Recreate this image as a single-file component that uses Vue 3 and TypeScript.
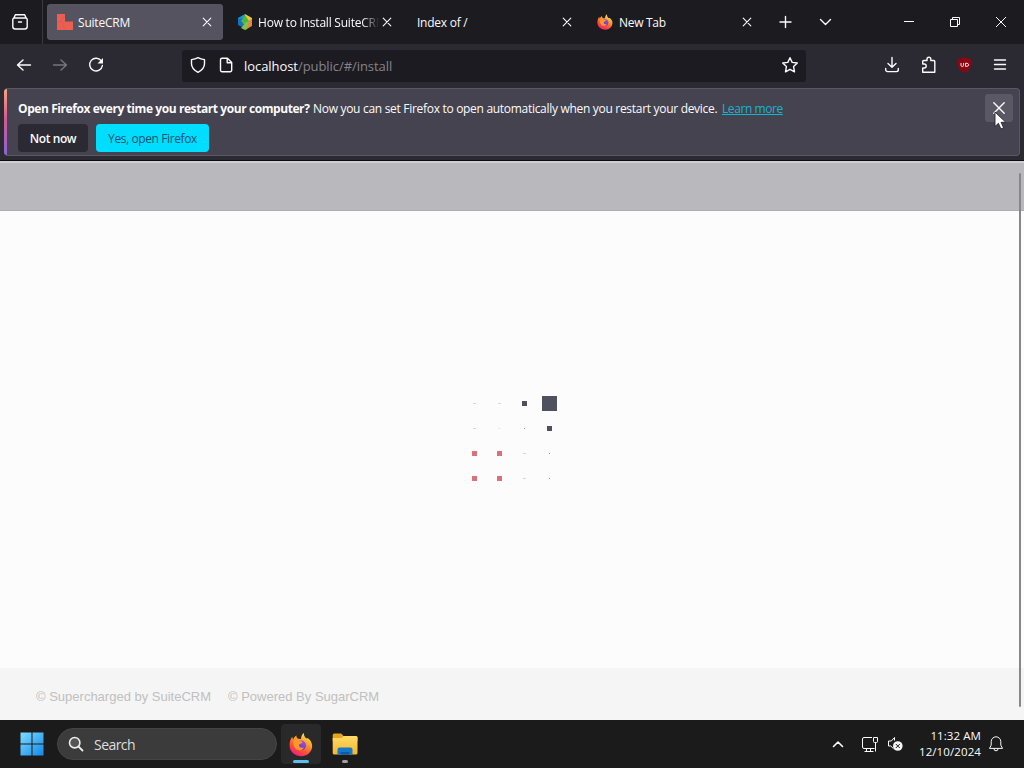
<script setup lang="ts">
interface Tab { title: string; icon: 'suite' | 'hex' | 'fox' | ''; active?: boolean; fit: string }
const tabs: Tab[] = [
  { title: 'SuiteCRM', icon: 'suite', active: true, fit: 'fit-a' },
  { title: 'How to Install SuiteCRM', icon: 'hex', fit: 'fit-b' },
  { title: 'Index of /', icon: '', fit: 'fit-c' },
  { title: 'New Tab', icon: 'fox', fit: 'fit-d' },
]
const dots: string[] = [
  'dash', 'dash', 'dark', 'big',
  'dash', 'faint', 'tiny', 'dark',
  'red', 'red', 'dash', 'tiny',
  'red', 'red', 'dash', 'tiny',
]
</script>

<template>
  <div class="screen">
    <svg class="defs" width="0" height="0" aria-hidden="true">
      <defs>
        <linearGradient id="foxBody" x1=".8" y1="0" x2=".25" y2="1">
          <stop offset="0" stop-color="#fff04a" /><stop offset=".35" stop-color="#ffa42a" />
          <stop offset=".68" stop-color="#ff5138" /><stop offset="1" stop-color="#ec1785" />
        </linearGradient>
        <linearGradient id="foxCore" x1=".7" y1="0" x2=".3" y2="1">
          <stop offset="0" stop-color="#a850e8" /><stop offset="1" stop-color="#513ac4" />
        </linearGradient>
        <linearGradient id="win" x1="0" y1="0" x2="1" y2="1">
          <stop offset="0" stop-color="#7edcff" /><stop offset="1" stop-color="#1289e8" />
        </linearGradient>
        <linearGradient id="folder" x1="0" y1="0" x2="0" y2="1">
          <stop offset="0" stop-color="#ffdb67" /><stop offset="1" stop-color="#f5b72c" />
        </linearGradient>
        <symbol id="firefox" viewBox="0 0 24 24">
          <path fill="url(#foxBody)" d="M15 .5c-.3 2.500.6 4 2.300 5.400 1-.1 1.700.1 2.300.4 2.600 2.200 4 5.400 3.500 8.500C22.300 20 18 23.700 12.500 23.700 6 23.700.8 19.300.6 13.200.5 9.900 1.300 7 3.200 4.200c.1 1.200.5 2 1 2.500C4.900 5 6.100 3.700 7.300 3c0 1.500.7 2.600 2 3.200l2.700.2C12.100 3.900 13 1.800 15 .5Z" />
          <circle cx="12.300" cy="12.800" r="4.800" fill="url(#foxCore)" />
          <path fill="#ff9a27" d="M4.300 8.500c2-1.800 4.500-1.200 6 .1 1.200.1 2.400.2 3.200 1.100-1 1.600-3 1.300-3.500 2.600-.3 2.500 2.300 3.600 4.800 2.600-1.300 3.300-6.200 4-8.700.7-1.400-1.900-2-4.500-1.800-7.100Z" />
        </symbol>
        <symbol id="x" viewBox="0 0 16 16"><path d="M4.200 4.200l7.600 7.600M11.800 4.200l-7.600 7.600" /></symbol>
      </defs>
    </svg>

    <header class="tabbar">
      <div class="view">
        <svg class="ic" width="18" height="18" viewBox="0 0 18 18"><path d="M4.500 1.700h9M3.300 5h11.400a1.500 1.500 0 0 1 1.500 1.500v7a2.500 2.500 0 0 1-2.500 2.500H4.300a2.500 2.500 0 0 1-2.500-2.500v-7A1.500 1.500 0 0 1 3.300 5ZM7.500 9h3M2.500 5.500 4.500 1.700M15.500 5.500l-2-3.800" /></svg>
      </div>
      <div class="tabs">
        <div v-for="t in tabs" :key="t.title" class="tab" :class="{ active: t.active }">
          <svg v-if="t.icon === 'suite'" class="fav" viewBox="0 0 16 16"><path d="M0 0h8v7.500h8V16H0Z" fill="#ea5f50" /><path d="M0 8h5l3 8M8 0 4 8" stroke="#dd5549" fill="none" stroke-width=".6" /></svg>
          <svg v-else-if="t.icon === 'hex'" class="fav" viewBox="0 0 16 16">
            <path d="M8 0 1 4v4l7-1Z" fill="#159bd0" /><path d="M8 0l7 4v4L8 7Z" fill="#f6c432" />
            <path d="M1 5l6-1 1 4-3 5-4-2Z" fill="#1470ca" /><path d="M8 1 4 7l4 5 4-5Z" fill="#49b847" />
            <path d="M15 5v7l-7 4V9Z" fill="#ef823b" /><path d="M8 9l4-2-2 8-2 1-4-2Z" fill="#7bc54c" />
          </svg>
          <svg v-else-if="t.icon === 'fox'" class="fav"><use href="#firefox" /></svg>
          <span class="title" :class="t.fit">{{ t.title }}</span>
          <svg class="ic close" width="16" height="16"><use href="#x" /></svg>
        </div>
      </div>
      <svg class="ic" width="40" height="16" viewBox="0 0 40 16"><path d="M20.500 2.500v11M15 8h11" /></svg>
      <svg class="ic" width="40" height="16" viewBox="0 0 40 16"><path d="M15.500 5.500l5 5 5-5" /></svg>
      <div class="controls">
        <svg class="ic thin" width="46" height="16" viewBox="0 0 46 16"><path d="M18 7.500h10" /></svg>
        <svg class="ic thin" width="46" height="16" viewBox="0 0 46 16"><path d="M18.500 5.500h7v7h-7ZM20.500 5.500v-2h7v7h-2" /></svg>
        <svg class="ic thin" width="46" height="16" viewBox="0 0 46 16"><path d="M18 3l10 10M28 3 18 13" /></svg>
      </div>
    </header>

    <nav class="navbar">
      <div class="history">
        <svg class="ic" width="36" height="18" viewBox="0 0 36 18"><path d="M24.500 9H11.500M17 4 11.500 9l5.500 5" /></svg>
        <svg class="ic dim" width="36" height="18" viewBox="0 0 36 18"><path d="M11.500 9h13M19 4 24.500 9 19 14" /></svg>
        <svg class="ic" width="36" height="18" viewBox="0 0 36 18"><path d="M23.500 5.200A6.400 6.400 0 1 0 24.400 9.500" /><path d="M25 2v5.500h-5.500Z" fill="#fbfbfe" stroke="none" /></svg>
      </div>
      <div class="url">
        <svg class="ic" width="32" height="18" viewBox="0 0 32 18"><path d="M16 1.700c2 1.200 4.200 1.700 6.500 1.900v4.200c0 4-2.700 6.600-6.500 8.500-3.800-1.900-6.500-4.500-6.500-8.500V3.600c2.300-.2 4.500-.7 6.500-1.900Z" /></svg>
        <svg class="ic" width="24" height="18" viewBox="0 0 24 18"><path d="M8 2.200h5.500l4.200 4.200v7.800a1.500 1.500 0 0 1-1.500 1.500H8a1.500 1.500 0 0 1-1.500-1.500V3.700A1.500 1.500 0 0 1 8 2.200ZM13.200 2.500v4.200h4.200" /></svg>
        <span class="addr">localhost<i>/public/#/install</i></span>
        <svg class="ic star" width="18" height="18" viewBox="0 0 18 18"><path d="M9 1.700l2.200 4.700 5.100.6-3.700 3.600.9 5.200L9 13.300l-4.500 2.500.9-5.200L1.700 7l5.100-.6Z" /></svg>
      </div>
      <div class="tools">
        <svg class="ic" width="36" height="18" viewBox="0 0 36 18"><path d="M18 1.500v9.500M14 7.500l4 3.800 4-3.800M11.700 12.500v1.300a1.800 1.800 0 0 0 1.800 1.800h9a1.800 1.800 0 0 0 1.800-1.800v-1.300" /></svg>
        <svg class="ic" width="37" height="18" viewBox="0 0 37 18"><path d="M12.700 16.200V12h1.500a2 2 0 0 0 0-4h-1.500V5.500a1 1 0 0 1 1-1h3.300V3.200a1.900 1.900 0 0 1 3.800 0v1.300h3a1 1 0 0 1 1 1v10.700Z" /></svg>
        <svg width="35" height="18" viewBox="0 0 35 18"><path d="M17.500 1c2 1.200 4.500 1.500 7 2.500.6 6-1 10.500-7 13.300-6-2.800-7.600-7.300-7-13.300 2.500-1 5-1.300 7-2.500Z" fill="#8c0712" /><path d="M14 7v2.300q0 1.200 1.300 1.200T16.600 9.300V7M18.500 7.200v3.200q3.200.2 3.200-1.600T18.500 7.200" fill="none" stroke="#f4dfe1" /></svg>
        <svg class="ic" width="36" height="18" viewBox="0 0 36 18"><path d="M12.500 4h11M12.500 8.500h11M12.500 13h11" /></svg>
      </div>
    </nav>

    <section class="notice-wrap">
      <div class="notice">
        <p class="msg"><b>Open Firefox every time you restart your computer?</b><span class="now">Now you can set Firefox to open automatically when you restart your device.</span><a>Learn more</a></p>
        <div class="actions"><button class="no">Not now</button><button class="yes">Yes, open Firefox</button></div>
        <div class="dismiss">
          <svg class="ic" width="20" height="20" viewBox="0 0 20 20"><path d="M4.800 4.800l10.400 10.400M15.200 4.800 4.800 15.200" /></svg>
          <svg class="cursor" width="14" height="20" viewBox="0 0 14 20"><path d="M1 1v14.500l3.400-3.200 2.500 5.700 2.700-1.200-2.500-5.500h4.700Z" fill="#fff" stroke="#252530" stroke-width=".9" /></svg>
        </div>
      </div>
    </section>

    <main class="page">
      <div class="band"></div>
      <div class="content">
        <div class="loader"><div v-for="(d, i) in dots" :key="i" class="cell"><i :class="d"></i></div></div>
      </div>
      <footer><span class="f1">© Supercharged by SuiteCRM</span><span class="f2">© Powered By SugarCRM</span></footer>
      <div class="scroll"></div>
    </main>

    <div class="taskbar">
      <svg class="start" width="24" height="24" viewBox="0 0 24 24"><path d="M.5.500h11v11H.5ZM12.500.500h11v11h-11ZM.5 12.500h11v11H.5ZM12.500 12.500h11v11h-11Z" fill="url(#win)" /></svg>
      <div class="search">
        <svg width="16" height="16" viewBox="0 0 16 16"><circle cx="6.700" cy="6.700" r="5.200" fill="#555" stroke="#eee" stroke-width="1.600" /><path d="M10.600 10.600 14.500 14.500" stroke="#eee" stroke-width="1.800" stroke-linecap="round" /></svg>
        <span>Search</span>
      </div>
      <div class="app running"><svg width="24" height="25"><use href="#firefox" /></svg><i></i></div>
      <div class="app">
        <svg width="26" height="24" viewBox="0 0 26 24"><path d="M.7 3A1.500 1.500 0 0 1 2.200 1.500h7L11.500 4H24a1.500 1.500 0 0 1 1.500 1.500V9H.7Z" fill="#e5a51c" /><path d="M.7 6h9l2-2H24a1.500 1.500 0 0 1 1.500 1.500V21a1.500 1.500 0 0 1-1.500 1.500H2.200A1.500 1.500 0 0 1 .7 21Z" fill="url(#folder)" /><path d="M5.500 22.500v-5a2 2 0 0 1 2-2h11a2 2 0 0 1 2 2v5Z" fill="#1578cb" /><path d="M8.500 20h9v2.500h-9Z" fill="#0c5ba8" /></svg><i></i>
      </div>
      <div class="tray">
        <svg class="ic" width="12" height="10" viewBox="0 0 12 10"><path d="M1.500 7.500 6 3l4.500 4.500" stroke-width="1.600" /></svg>
        <svg class="ic thin net" width="18" height="18" viewBox="0 0 18 18"><path d="M11 2.500H3A1.500 1.500 0 0 0 1.500 4v8A1.500 1.500 0 0 0 3 13.500h10.500M5.500 13.500v3M9.500 13.500v3M3.500 16.500h9M12.500 2.500h4v4a1 1 0 0 1-1 1h-2a1 1 0 0 1-1-1ZM14.500 7.500v9" /></svg>
        <svg class="ic thin vol" width="17" height="16" viewBox="0 0 17 16"><path d="M7.500 1.500v3M7.500 1.500 4.300 5H1.500v5h2.300l2.700 2.700" /><circle cx="10.800" cy="10" r="4.800" fill="#f5f5f5" stroke="none" /><path d="M8.800 8l4 4M12.800 8l-4 4" stroke="#1b1b1b" /></svg>
        <div class="clock"><span>11:32 AM</span><span class="date">12/10/2024</span></div>
        <svg class="ic thin bell" width="16" height="18" viewBox="0 0 16 18"><path d="M8 1.800a4.800 4.800 0 0 0-4.800 4.800v3.600L1.500 13.400h13l-1.700-3.200V6.600A4.800 4.800 0 0 0 8 1.800ZM6 13.800a2 2 0 0 0 4 0" /></svg>
      </div>
    </div>
  </div>
</template>

<style>
html, body { margin: 0; overflow: hidden; background: #fcfcfc; }
</style>

<style scoped>
* { box-sizing: border-box; }
.screen { width: 1024px; height: 768px; display: flex; flex-direction: column; font-family: "Open Sans", "Noto Sans", sans-serif; font-size: 12px; color: #fbfbfe; overflow: hidden; white-space: nowrap; }
.defs { position: absolute; }
svg { display: block; flex: none; }
.ic { fill: none; stroke: #fbfbfe; stroke-width: 1.4; stroke-linecap: round; stroke-linejoin: round; }
.thin { stroke-width: 1; stroke-linecap: butt; }
.dim { stroke: #77757d; }
.tabbar { height: 44px; background: #1c1b20; display: flex; align-items: center; flex: none; }
.view { width: 43px; height: 44px; border-right: 1px solid #3a393f; display: flex; align-items: center; padding-left: 11px; }
.tabs { display: flex; gap: 4px; padding: 0 2px 0 4px; }
.tab { width: 176px; height: 36px; border-radius: 4px; display: flex; align-items: center; padding: 0 8.5px 0 10px; }
.active { background: #55535f; box-shadow: inset 0 0 1px #777580; }
.fav { width: 16px; height: 16px; margin-right: 5px; }
.title { flex: 1; overflow: hidden; line-height: 20px; padding-top: 1px; }
.fit-a { letter-spacing: -.2px; }
.fit-b { letter-spacing: -.22px; -webkit-mask-image: linear-gradient(90deg, #000 86%, transparent); mask-image: linear-gradient(90deg, #000 86%, transparent); }
.fit-c { letter-spacing: -.25px; }
.fit-d { margin-left: 1px; letter-spacing: -.3px; }
.close { stroke-width: 1.1; }
.controls { display: flex; margin-left: auto; }
.navbar { height: 44px; flex: none; background: #2b2a33; display: flex; align-items: center; }
.history { display: flex; width: 182px; padding-left: 6px; margin-top: -3px; }
.url { width: 624px; height: 32px; margin-top: -1px; background: #1c1b21; border-radius: 3px; display: flex; align-items: center; padding-bottom: 1px; }
.addr { font-size: 13px; letter-spacing: -.06px; margin-left: 6px; padding-top: 1px; }
.addr i { font-style: normal; color: #85848a; }
.star { margin-left: auto; margin-right: 7px; }
.tools { display: flex; margin-left: auto; padding-right: 6px; margin-top: -2px; }
.notice-wrap { height: 73px; flex: none; background: #2b2a33; border-bottom: 1px solid #0d0c12; padding: 0 4px 4px; }
.notice { position: relative; height: 68px; background: #45434f; border: 1px solid #5a5863; border-left: 0; border-radius: 4px; padding: 10px 0 0 14px; }
.notice::before { content: ""; position: absolute; left: 0; top: 0; width: 3px; height: 66px; border-radius: 3px 0 0 3px; background: linear-gradient(#f8a47c, #d55a91 45%, #8c62d9); }
.msg { margin: 0; line-height: 20px; display: flex; }
.msg b { width: 295px; letter-spacing: -.42px; }
.now { width: 409px; letter-spacing: -.3px; }
.msg a { color: #16b5cf; text-decoration: underline; letter-spacing: -.42px; }
.actions { display: flex; gap: 8px; margin-top: 5px; }
.actions button { height: 28px; border: 0; border-radius: 4px; padding: 1px 0 0; font: 600 12px "Open Sans", "Noto Sans", sans-serif; }
.actions .no { width: 70px; background: #2b2a33; color: #fbfbfe; letter-spacing: -.4px; }
.actions .yes { width: 113px; background: #00ddff; color: #17506a; font-weight: 500; letter-spacing: -.4px; }
.dismiss { position: absolute; left: 981px; top: 5px; width: 28px; height: 28px; background: #5a5864; border-radius: 3px; display: flex; align-items: center; justify-content: center; }
.cursor { position: absolute; left: 9px; top: 17px; }
.page { position: relative; height: 559px; flex: none; display: flex; flex-direction: column; background: #fcfcfc; }
.band { height: 50px; background: #b9b8bc; border-top: 2px solid #cfced3; border-bottom: 1px solid #aeadb1; }
.content { height: 457px; padding: 180px 0 0 462px; }
.loader { display: grid; grid-template-columns: repeat(4, 25px); grid-auto-rows: 25px; }
.cell { display: flex; align-items: center; justify-content: center; }
.big { width: 15px; height: 15px; background: #50515f; }
.dark { width: 5px; height: 5px; background: #505059; }
.red { width: 5px; height: 5px; background: #d9717b; }
.dash { width: 3px; height: 1px; background: #d8d8d8; }
.faint { width: 3px; height: 1px; background: #ececec; }
.tiny { width: 1px; height: 1px; background: #999; }
footer { height: 52px; background: #f5f5f5; display: flex; align-items: center; padding: 4px 0 0 36px; font: 13px "Liberation Sans", Arial, sans-serif; color: #c0c0c0; }
.f1 { width: 192px; }
.scroll { position: absolute; left: 1019px; top: 12px; width: 2px; height: 534px; background: #87878b; border-radius: 1px; }
.taskbar { height: 48px; flex: none; background: #1b1b1b; display: flex; align-items: center; padding-left: 20px; }
.start { margin-right: 13px; }
.search { width: 220px; height: 32px; border-radius: 16px; background: #3b3b3b; border: 1px solid #454545; display: flex; align-items: center; padding-left: 10px; gap: 10px; font-size: 14px; color: #dedede; margin-right: 4px; }
.search span { letter-spacing: -.55px; }
.app { position: relative; width: 40px; height: 40px; border-radius: 4px; margin-right: 4px; display: flex; align-items: center; justify-content: center; }
.running { background: #292929; }
.app i { position: absolute; bottom: 1px; left: 17px; width: 6px; height: 3px; border-radius: 2px; background: #a0a0a0; }
.app.running i { left: 12px; width: 16px; background: #5bc0ee; }
.tray { margin-left: auto; display: flex; align-items: center; padding-right: 20px; }
.net { margin-left: 17px; }
.vol { margin-left: 8px; }
.clock { width: 77px; margin-right: 7px; text-align: right; font-size: 11.500px; line-height: 16px; display: flex; flex-direction: column; letter-spacing: .08px; }
.date { letter-spacing: .1px; }
</style>
